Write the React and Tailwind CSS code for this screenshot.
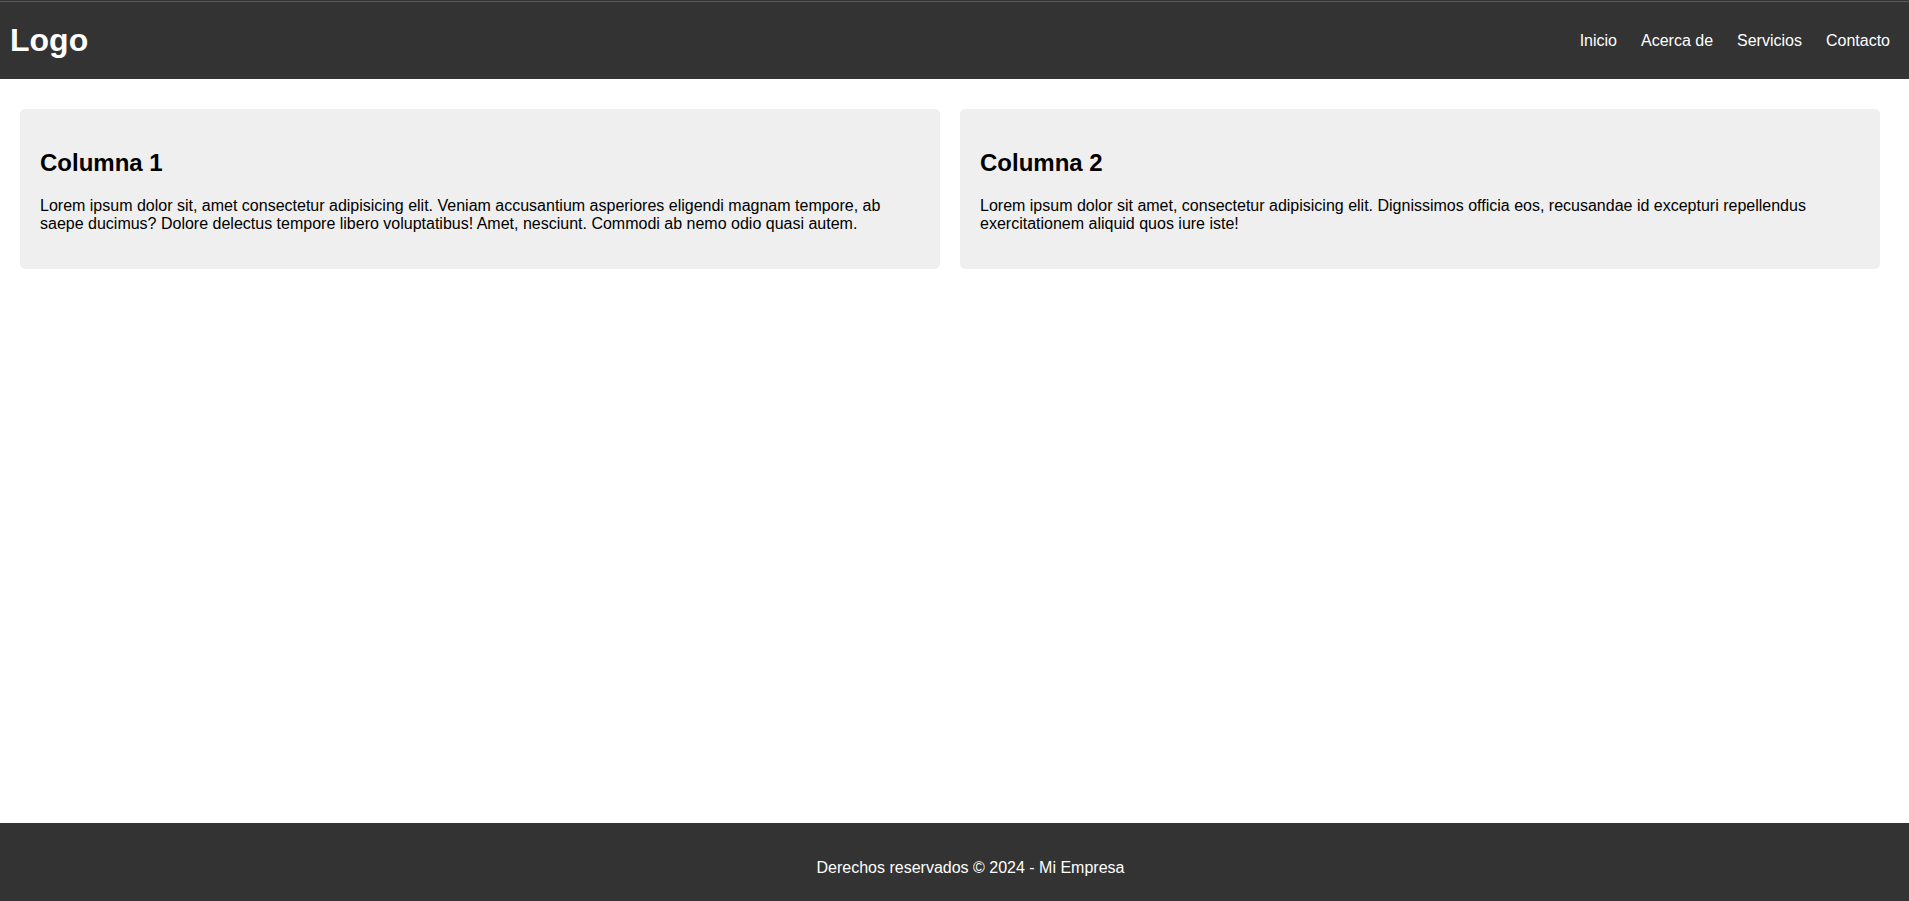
import React from 'react';

const links = ['Inicio', 'Acerca de', 'Servicios', 'Contacto'];

const cards = [
  {
    title: 'Columna 1',
    text: 'Lorem ipsum dolor sit, amet consectetur adipisicing elit. Veniam accusantium asperiores eligendi magnam tempore, ab saepe ducimus? Dolore delectus tempore libero voluptatibus! Amet, nesciunt. Commodi ab nemo odio quasi autem.',
  },
  {
    title: 'Columna 2',
    text: 'Lorem ipsum dolor sit amet, consectetur adipisicing elit. Dignissimos officia eos, recusandae id excepturi repellendus exercitationem aliquid quos iure iste!',
  },
];

const App = () => {
  return (
    <div className="min-h-screen flex flex-col bg-white font-['Liberation_Sans',Arial,sans-serif] text-black">
      <header className="h-[79px] bg-[#333] text-white border-t border-t-[#333]">
        <div className="h-px bg-[#5a5a5a]" />
        <div className="h-[77px] flex items-center justify-between pl-[10px] pr-[19px]">
          <h1 className="text-[32px] font-bold leading-[normal]">Logo</h1>
          <nav className="flex items-center gap-[24px] text-[16px] leading-[normal]">
            {links.map((l) => (
              <a key={l} href="#" className="text-white hover:text-gray-200">{l}</a>
            ))}
          </nav>
        </div>
      </header>

      <main className="flex-1 flex gap-5 pl-5 pt-[30px]">
        {cards.map((c) => (
          <section key={c.title} className="w-[920px] h-[160px] bg-[#efefef] rounded-[5px] p-5">
            <h2 className="text-[24px] font-bold leading-[normal] mt-[20px] mb-[20px]">{c.title}</h2>
            <p className="text-[16px] leading-[normal]">{c.text}</p>
          </section>
        ))}
      </main>

      <footer className="h-[78px] bg-[#333] text-white pt-9 pl-8 text-center">
        <p className="text-[16px] leading-[normal]">Derechos reservados © 2024 - Mi Empresa</p>
      </footer>
    </div>
  );
};

export default App;
